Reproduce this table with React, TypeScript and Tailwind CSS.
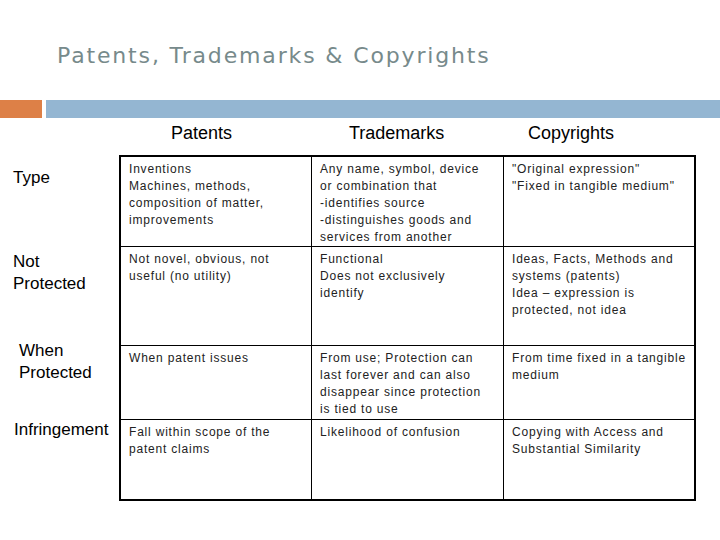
const headers = [
  { label: "Patents", pad: "pl-[50px]" },
  { label: "Trademarks", pad: "pl-[37px]" },
  { label: "Copyrights", pad: "pl-[24px]" },
];

const rows = [
  {
    label: ["Type"],
    labelClass: "h-[92px] pt-[12px] pl-[13px]",
    rowClass: "h-[90px] border-b border-black",
    cells: [
      ["Inventions", "Machines, methods,", "composition of matter,", "improvements"],
      [
        "Any name, symbol, device",
        "or combination that",
        "-identifies source",
        "-distinguishes goods and",
        "services from another",
      ],
      ['"Original expression"', '"Fixed in tangible medium"'],
    ],
  },
  {
    label: ["Not", "Protected"],
    labelClass: "h-[99px] pt-[4px] pl-[13px]",
    rowClass: "h-[99px] border-b border-black",
    cells: [
      ["Not novel, obvious, not", "useful (no utility)"],
      ["Functional", "Does not exclusively", "identify"],
      ["Ideas, Facts, Methods and", "systems (patents)", "Idea \u2013 expression is", "protected, not idea"],
    ],
  },
  {
    label: ["When", "Protected"],
    labelClass: "h-[74px] -mt-[6px] pb-[6px] pl-[19px] box-content",
    rowClass: "h-[74px] border-b border-black",
    cells: [
      ["When patent issues"],
      ["From use; Protection can", "last forever and can also", "disappear since protection", "is tied to use"],
      ["From time fixed in a tangible", "medium"],
    ],
  },
  {
    label: ["Infringement"],
    labelClass: "h-[81px] -mt-[1px] pl-[14px] box-content",
    rowClass: "h-[79px]",
    cells: [
      ["Fall within scope of the", "patent claims"],
      ["Likelihood of confusion"],
      ["Copying with Access and", "Substantial Similarity"],
    ],
  },
];

const colWidths = ["w-[191px] border-r border-black", "w-[192px] border-r border-black", "w-[190px]"];
const headWidths = ["w-[191px]", "w-[192px]", "w-[190px]"];

export default function App() {
  return (
    <div className="w-[720px] h-[540px] bg-white overflow-hidden font-['Liberation_Sans',Arial,sans-serif]">
      <div className="pt-[43px] pl-[57px]">
        <h1 className="text-[22px] leading-[26px] tracking-[1.85px] text-[#778a8b] font-['DejaVu_Sans',sans-serif] whitespace-nowrap">
          Patents, Trademarks &amp; Copyrights
        </h1>
      </div>

      <div className="mt-[31px] flex h-[18px]">
        <div className="w-[42px] bg-[#dd8047]" />
        <div className="ml-[4px] flex-1 bg-[#94b6d2]" />
      </div>

      <div className="mt-[4px] flex pl-[121px] text-[18px] leading-[22px] text-black">
        {headers.map((h, i) => (
          <div key={h.label} className={`${headWidths[i]} ${h.pad}`}>
            {h.label}
          </div>
        ))}
      </div>

      <div className="mt-[11px] flex">
        <div className="w-[119px] flex flex-col text-[17px] leading-[22px] text-black">
          {rows.map((r) => (
            <div key={r.label.join(" ")} className={r.labelClass}>
              {r.label.map((l) => (
                <div key={l}>{l}</div>
              ))}
            </div>
          ))}
        </div>

        <div className="w-[577px] border-2 border-black">
          {rows.map((r) => (
            <div key={r.label.join(" ")} className={`flex ${r.rowClass}`}>
              {r.cells.map((lines, ci) => (
                <div
                  key={ci}
                  className={`${colWidths[ci]} pl-2 pt-[4px] text-[12px] leading-[17px] tracking-[0.8px] text-[#222]`}
                >
                  {lines.map((line) => (
                    <div key={line} className="whitespace-nowrap">
                      {line}
                    </div>
                  ))}
                </div>
              ))}
            </div>
          ))}
        </div>
      </div>
    </div>
  );
}
